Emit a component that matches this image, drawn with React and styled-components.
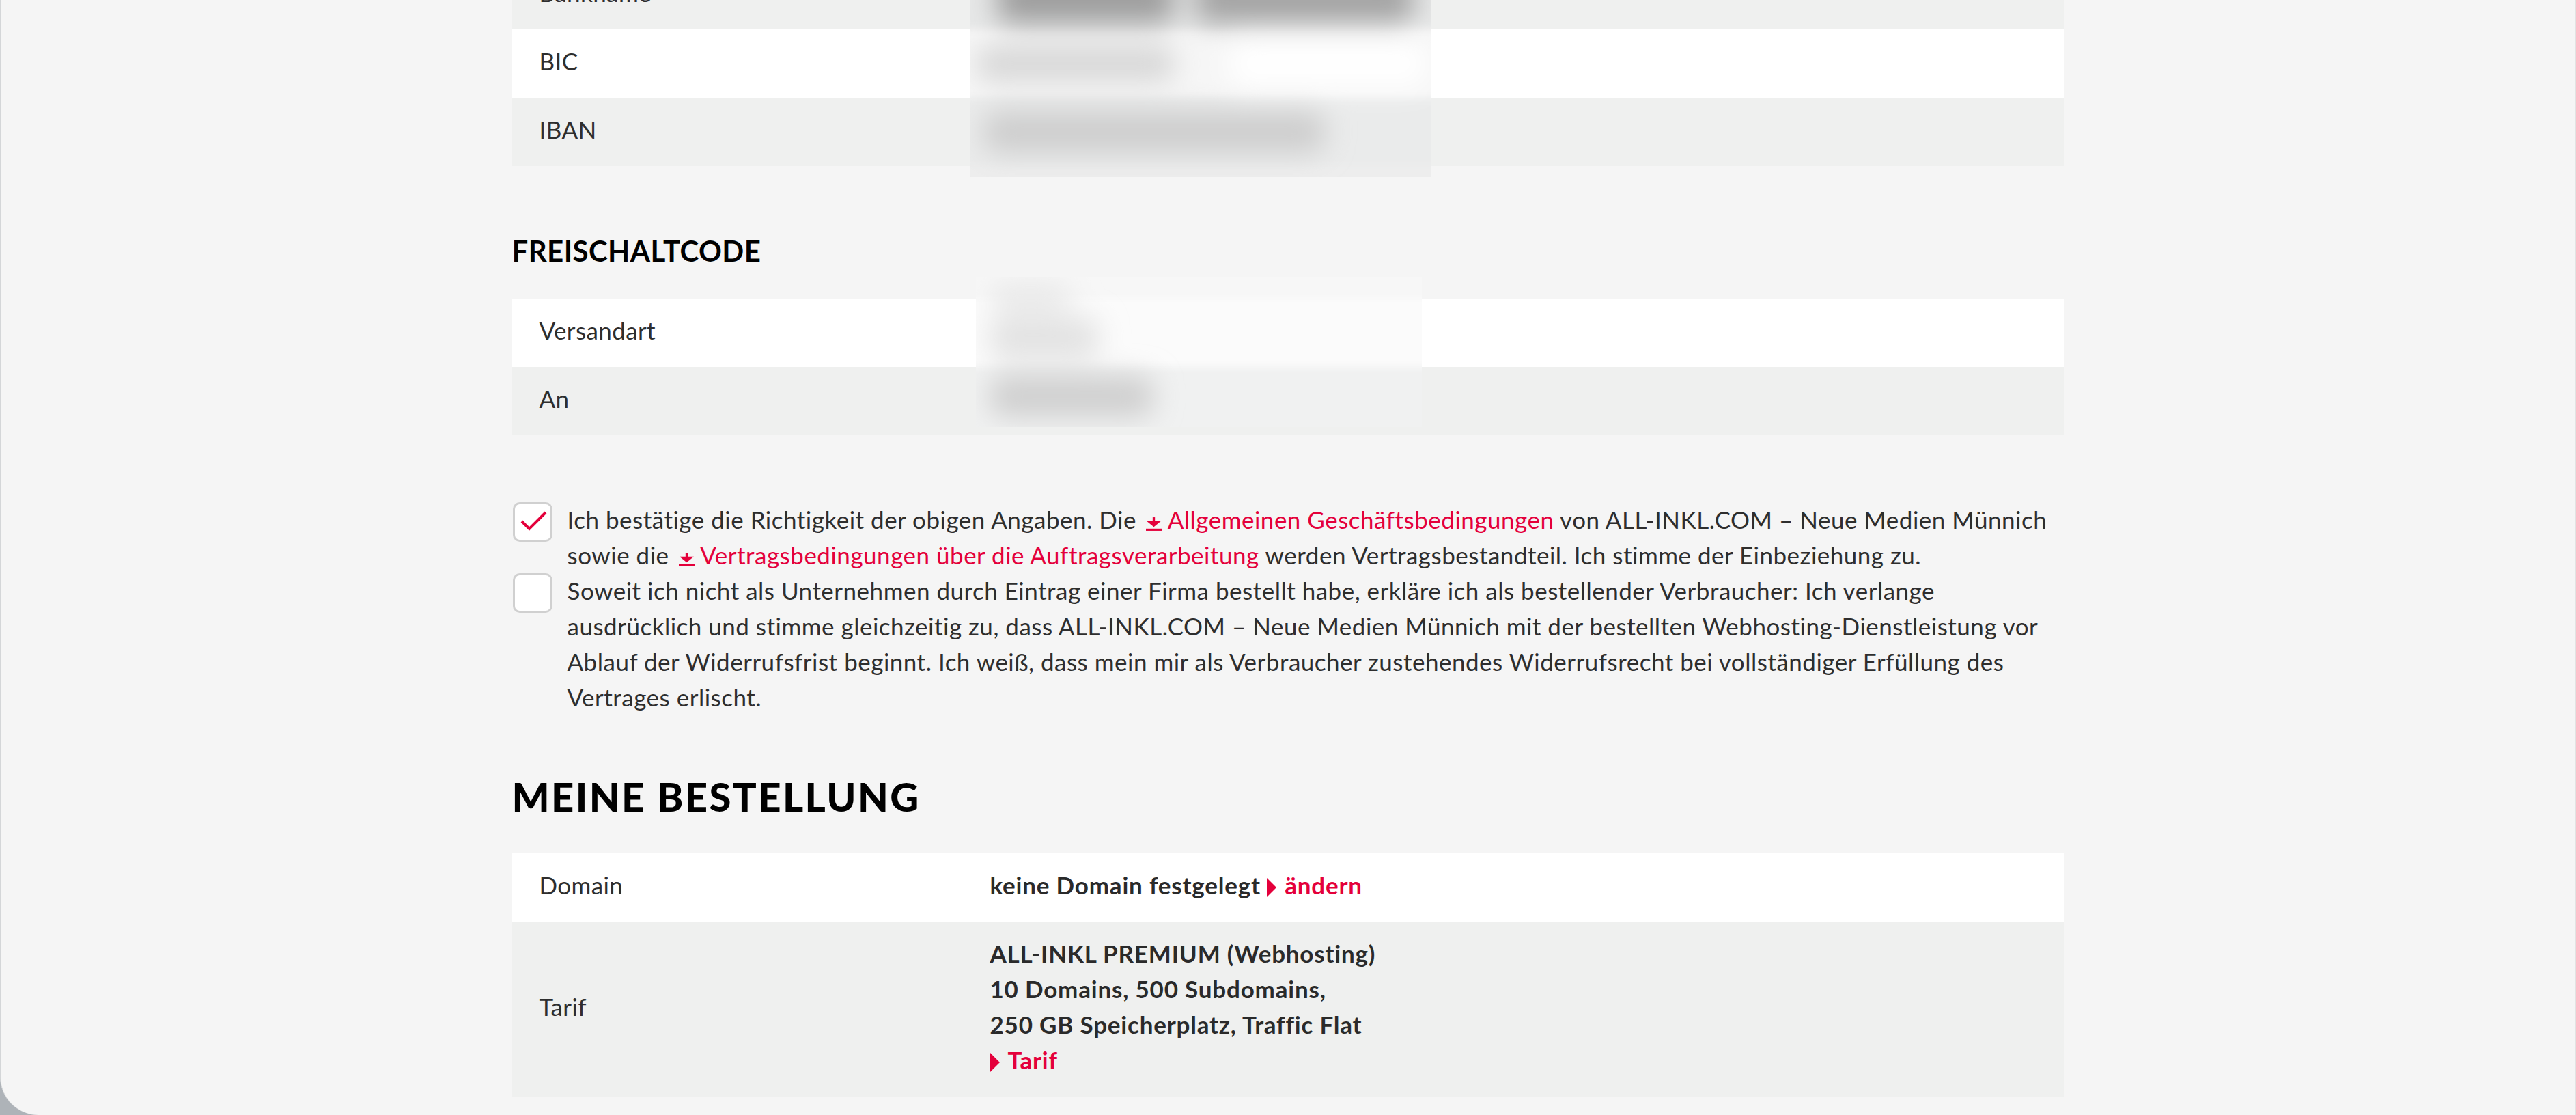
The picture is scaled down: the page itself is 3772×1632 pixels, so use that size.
import styled, { createGlobalStyle } from "styled-components";

const RED = "#e4003b";
const TEXT = "#2e2e2e";

const GlobalStyle = createGlobalStyle`
  html, body {
    margin: 0;
    padding: 0;
    background: #aeb3b8;
  }
  body {
    font-family: Lato, "Noto Sans", sans-serif;
    color: ${TEXT};
  }
`;

function DownloadIcon() {
  return (
    <DlSvg viewBox="0 0 22 19" width="23" height="20">
      <rect x="9.4" y="0" width="3.2" height="8" fill={RED} />
      <polygon points="1,5.5 21,5.5 11,13.5" fill={RED} />
      <rect x="0" y="16" width="22" height="3" fill={RED} />
    </DlSvg>
  );
}

function PlayIcon() {
  return (
    <PlaySvg viewBox="0 0 14 28" width="14" height="28">
      <polygon points="0,0 14,14 0,28" fill={RED} />
    </PlaySvg>
  );
}

function CheckMark() {
  return (
    <svg viewBox="0 0 52 52" width="52" height="52">
      <polyline
        points="10,25 21,36 45,12"
        fill="none"
        stroke={RED}
        strokeWidth="4"
        strokeLinejoin="miter"
      />
    </svg>
  );
}

// blurred value columns (the values are hidden in the screenshot)
function BlurPatch({ id, top, left, width, height, bands, blobs }) {
  return (
    <BlurPanel $top={top} $left={left} $w={width} $h={height}>
      <svg width={width} height={height} viewBox={`0 0 ${width} ${height}`}>
        <defs>
          <filter id={id} x="-30%" y="-50%" width="160%" height="200%">
            <feGaussianBlur stdDeviation="20" />
          </filter>
          <filter id={id + "s"} x="-5%" y="-5%" width="110%" height="110%">
            <feGaussianBlur stdDeviation="6" />
          </filter>
        </defs>
        <g filter={`url(#${id}s)`}>
          {bands.map((b, i) => (
            <rect key={i} x="-20" y={b.y} width={width + 40} height={b.h} fill={b.c} />
          ))}
        </g>
        <g filter={`url(#${id})`}>
          {blobs.map((b, i) => (
            <rect key={i} x={b.x} y={b.y} width={b.w} height={b.h} rx="20" fill={b.c} />
          ))}
        </g>
      </svg>
    </BlurPanel>
  );
}

export default function App() {
  return (
    <Window>
      <GlobalStyle />
      <Content>
        <TableWrap>
          <Table>
            <Row $tone="gray">
              <Label>Bankname</Label>
              <Value />
            </Row>
            <Row $tone="white">
              <Label>BIC</Label>
              <Value />
            </Row>
            <Row $tone="gray">
              <Label>IBAN</Label>
              <Value />
            </Row>
          </Table>
          <BlurPatch
            id="b1"
            top={0}
            left={670}
            width={676}
            height={316}
            bands={[
              { y: -20, h: 120, c: "#e6e7e7" },
              { y: 100, h: 100, c: "#f6f6f6" },
              { y: 200, h: 100, c: "#eaebeb" },
              { y: 300, h: 36, c: "#ededed" },
            ]}
            blobs={[
              { x: 40, y: 20, w: 260, h: 70, c: "#9c9c9c" },
              { x: 330, y: 20, w: 320, h: 70, c: "#a3a3a3" },
              { x: 10, y: 125, w: 290, h: 50, c: "#d6d6d6" },
              { x: 380, y: 115, w: 290, h: 70, c: "#ffffff" },
              { x: 20, y: 220, w: 500, h: 60, c: "#cdcdcd" },
            ]}
          />
        </TableWrap>

        <SectionTitle $size={42} $weight={700} $top={103} $bottom={49} $ls={0.4}>
          FREISCHALTCODE
        </SectionTitle>

        <TableWrap>
          <Table>
            <Row $tone="white">
              <Label>Versandart</Label>
              <Value />
            </Row>
            <Row $tone="gray">
              <Label>An</Label>
              <Value />
            </Row>
          </Table>
          <BlurPatch
            id="b2"
            top={-32}
            left={679}
            width={653}
            height={220}
            bands={[
              { y: -20, h: 52, c: "#f7f7f7" },
              { y: 32, h: 100, c: "#fbfbfb" },
              { y: 132, h: 110, c: "#f0f1f1" },
            ]}
            blobs={[
              { x: 20, y: 10, w: 120, h: 40, c: "#e8e8e8" },
              { x: 20, y: 60, w: 160, h: 60, c: "#e2e2e2" },
              { x: 20, y: 145, w: 240, h: 60, c: "#cfcfcf" },
            ]}
          />
        </TableWrap>

        <ConsentList>
          <ConsentItem>
            <Box $checked>
              <CheckMark />
            </Box>
            <ConsentText>
              Ich bestätige die Richtigkeit der obigen Angaben. Die{" "}
              <RedLink>
                <DownloadIcon /> Allgemeinen Geschäftsbedingungen
              </RedLink>{" "}
              von ALL-INKL.COM – Neue Medien Münnich
              <br />
              sowie die{" "}
              <RedLink>
                <DownloadIcon /> Vertragsbedingungen über die Auftragsverarbeitung
              </RedLink>{" "}
              werden Vertragsbestandteil. Ich stimme der Einbeziehung zu.
            </ConsentText>
          </ConsentItem>
          <ConsentItem>
            <Box />
            <ConsentText>
              Soweit ich nicht als Unternehmen durch Eintrag einer Firma bestellt habe, erkläre ich als
              bestellender Verbraucher: Ich verlange
              <br />
              ausdrücklich und stimme gleichzeitig zu, dass ALL-INKL.COM – Neue Medien Münnich mit der
              bestellten Webhosting-Dienstleistung vor
              <br />
              Ablauf der Widerrufsfrist beginnt. Ich weiß, dass mein mir als Verbraucher zustehendes
              Widerrufsrecht bei vollständiger Erfüllung des
              <br />
              Vertrages erlischt.
            </ConsentText>
          </ConsentItem>
        </ConsentList>

        <SectionTitle $size={58} $weight={900} $top={91} $bottom={54} $ls={2.4}>
          MEINE BESTELLUNG
        </SectionTitle>

        <Table>
          <Row $tone="white">
            <Label>Domain</Label>
            <Value $bold>
              keine Domain festgelegt{" "}
              <Action>
                <PlayIcon />
                ändern
              </Action>
            </Value>
          </Row>
          <Row $tone="gray">
            <Label>Tarif</Label>
            <Value $bold>
              ALL-INKL PREMIUM (Webhosting)
              <br />
              10 Domains, 500 Subdomains,
              <br />
              250 GB Speicherplatz, Traffic Flat
              <br />
              <Action>
                <PlayIcon />
                Tarif
              </Action>
            </Value>
          </Row>
        </Table>
      </Content>
    </Window>
  );
}

const Window = styled.div`
  height: 1632px;
  box-sizing: border-box;
  background: #f5f5f5;
  border-left: 1px solid #d4d6d8;
  border-right: 2px solid #e2e2e2;
  border-bottom-left-radius: 56px;
  overflow: hidden;
`;

const Content = styled.div`
  width: 2272px;
  margin: -57px auto 0;
`;

const TableWrap = styled.div`
  position: relative;
`;

const Table = styled.div`
  display: flex;
  flex-direction: column;
`;

const Row = styled.div`
  display: flex;
  min-height: 100px;
  box-sizing: border-box;
  background: ${({ $tone }) => ($tone === "white" ? "#ffffff" : "#eff0ef")};
`;

const Label = styled.div`
  width: 660px;
  flex: none;
  box-sizing: border-box;
  padding: 20px 40px 28px;
  display: flex;
  align-items: center;
  font-size: 35px;
  line-height: 52px;
  letter-spacing: 0.4px;
  color: ${TEXT};
`;

const Value = styled.div`
  flex: 1;
  padding: 20px 40px 28px;
  font-size: 35px;
  line-height: 52px;
  letter-spacing: ${({ $bold }) => ($bold ? "0.8px" : "0.3px")};
  font-weight: ${({ $bold }) => ($bold ? 700 : 400)};
  color: #2a2a2a;
`;

const Action = styled.span`
  color: ${RED};
  font-weight: 700;
  white-space: nowrap;
`;

const PlaySvg = styled.svg`
  vertical-align: -4px;
  margin-right: 12px;
`;

const DlSvg = styled.svg`
  vertical-align: -3px;
  margin-left: 5px;
`;

const BlurPanel = styled.div`
  position: absolute;
  top: ${({ $top }) => $top}px;
  left: ${({ $left }) => $left}px;
  width: ${({ $w }) => $w}px;
  height: ${({ $h }) => $h}px;
  overflow: hidden;
  pointer-events: none;
  svg {
    display: block;
  }
`;

const SectionTitle = styled.h2`
  margin: ${({ $top }) => $top}px 0 ${({ $bottom }) => $bottom}px;
  font-size: ${({ $size }) => $size}px;
  line-height: 1;
  font-weight: ${({ $weight }) => $weight};
  letter-spacing: ${({ $ls }) => $ls}px;
  color: #000;
`;

const ConsentList = styled.div`
  margin-top: 97px;
  display: flex;
  flex-direction: column;
`;

const ConsentItem = styled.div`
  display: flex;
  align-items: flex-start;
  gap: 22px;
`;

const Box = styled.div`
  width: 58px;
  height: 58px;
  flex: none;
  box-sizing: border-box;
  margin-top: 1px;
  margin-left: 1px;
  border: 3px solid #d0d0d0;
  border-radius: 10px;
  background: #fff;
  display: flex;
  align-items: center;
  justify-content: center;
`;

const ConsentText = styled.p`
  margin: 0;
  font-size: 35px;
  line-height: 52px;
  letter-spacing: 0.5px;
  color: ${TEXT};
  white-space: nowrap;
`;

const RedLink = styled.span`
  color: ${RED};
`;
